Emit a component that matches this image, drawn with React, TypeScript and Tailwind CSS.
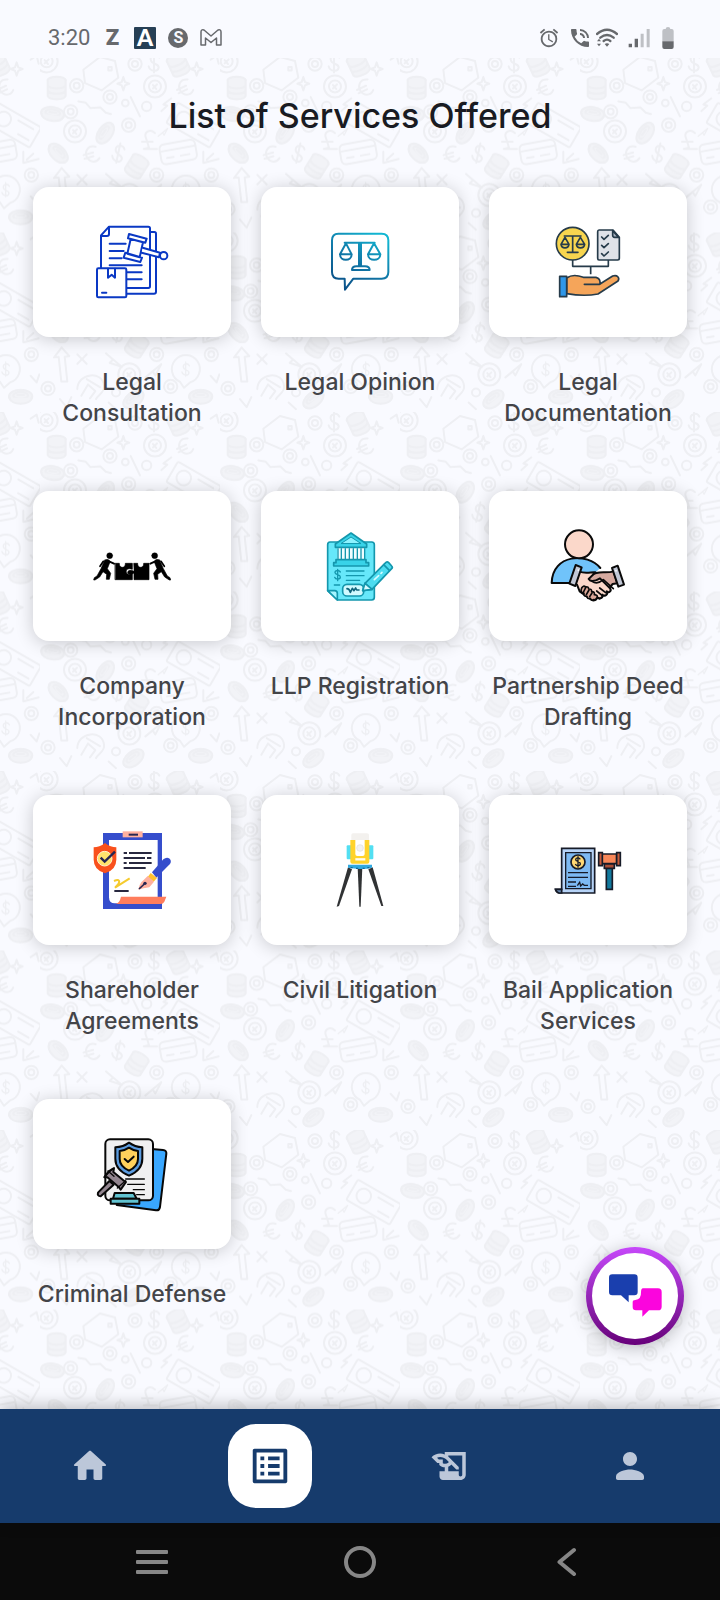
import type { ReactNode } from "react";
import { MdAlarm, MdHistoryEdu, MdListAlt, MdPhoneInTalk } from "react-icons/md";

function Doodles() {
  return (
    <svg className="absolute inset-0 h-full w-full" aria-hidden="true">
      <defs>
        <g id="coin">
          <circle r="20" />
          <circle r="9" />
        </g>
        <g id="bigcoin">
          <circle r="33" />
          <circle r="18" />
          <path d="M-6 6 6 -6M-6 -4 4 8" />
        </g>
        <g id="flatcoin" fill="#f2f3f7">
          <ellipse rx="35" ry="20" />
          <ellipse rx="22" ry="10" cy="-3" />
          <path d="M-34 4C-26 28 26 28 34 4M-10 -4h20" />
        </g>
        <g id="stack" fill="#f2f3f7">
          <ellipse rx="27" ry="10" cy="-24" />
          <path d="M-27 -24v48c6 13 48 13 54 0v-48M-27 -8c6 12 48 12 54 0M-27 8c6 12 48 12 54 0" />
        </g>
        <path id="curl" d="M16 -14C10 -28 -12 -24 -10 -8S16 2 14 16 -12 28 -16 12M0 -30v60" />
        <path id="euro" d="M18 -20C-4 -32 -18 -14 -16 2S4 30 20 16M-24 -5h30M-24 6h28" />
        <path id="dart" d="M-26 20 22 -20 4 14 -4 2Z" />
        <path id="spark" d="M0 -20 5 -5 18 0 5 5 0 20 -5 5 -18 0 -5 -5Z" />
        <pattern
          id="doodles"
          width="180"
          height="179.5"
          patternUnits="userSpaceOnUse"
          patternTransform="translate(40 -5)"
        >
          <g
            transform="scale(.3333)"
            fill="none"
            stroke="#eeeff3"
            strokeWidth="6"
            strokeLinecap="round"
            strokeLinejoin="round"
          >
            <use href="#bigcoin" x="20" y="25" />
            <use href="#coin" x="285" y="33" />
            <use href="#curl" x="342" y="28" />
            <path d="M130 50 180 12l45 12 10 50-50 38-50-22ZM205 42h10v10h-10Z" />
            <use href="#stack" transform="translate(415 35) rotate(-25)" />
            <use href="#stack" transform="translate(50 105)" />
            <use href="#coin" x="110" y="98" />
            <use href="#bigcoin" x="345" y="100" />
            <use href="#euro" transform="translate(435 105) rotate(-25)" />
            <use href="#coin" x="210" y="132" />
            <use href="#spark" x="250" y="92" />
            <use href="#spark" x="470" y="48" />
            <use href="#flatcoin" transform="translate(38 182) rotate(8)" />
            <use href="#coin" x="92" y="176" />
            <path d="M115 145l22 4 14 16 30-2 16 16 16 4" />
            <circle cx="256" cy="150" r="10" />
            <circle cx="320" cy="160" r="14" />
            <path d="M272 132 300 190M394 136l-24 18 12 4-18 16M512 20l18-12 6 24" />
            <use href="#bigcoin" x="105" y="235" />
            <use href="#flatcoin" transform="translate(195 240) rotate(-55)" />
            <use href="#coin" x="266" y="216" />
            <g transform="translate(466 218) rotate(30)">
              <rect x="-80" y="-34" width="150" height="70" rx="6" />
              <circle cx="-40" r="22" />
              <path d="M0 -18h52M20 18h36" />
            </g>
            <path d="M345 240c-16-14-36-2-26 18l8 26-16 4h40M306 266h32" />
            <use href="#dart" transform="translate(370 238) scale(.6)" />
            <use href="#flatcoin" transform="translate(55 300) rotate(45)" />
            <use href="#euro" transform="translate(155 305) rotate(-15)" />
            <use href="#curl" transform="translate(235 300) rotate(12)" />
            <use href="#stack" transform="translate(290 340) rotate(32)" />
            <g transform="translate(415 299) rotate(-10)">
              <rect x="-54" y="-32" width="108" height="60" rx="14" />
              <path d="M-54 -12H54M-36 10h20M6 10h26" />
            </g>
            <path d="M490 296v34l46-12M500 320l20-18" />
            <path d="M65 345 42 375l14-2 8 74h18l-8-74 14-2Z" />
            <path d="M112 366l28 28M140 366l-28 28" />
            <use href="#dart" transform="translate(222 385) rotate(80)" />
            <use href="#bigcoin" x="268" y="426" />
            <use href="#dart" x="342" y="415" />
            <use href="#coin" x="350" y="366" />
            <use href="#coin" x="514" y="366" />
            <path d="M420 448a42 42 0 1 1 30 2l-18 16Z" />
            <use href="#curl" transform="translate(437 410) scale(.7)" />
            <use href="#coin" x="24" y="468" />
            <path d="M112 470c0-48 76-58 80-10 4 20-20 28-24 40M124 490l20-34 22 20-16 22M140 440l40 24" />
            <use href="#flatcoin" transform="translate(280 500) rotate(-38)" />
            <use href="#flatcoin" transform="translate(482 492)" />
            <use href="#coin" x="392" y="462" />
            <path d="M60 500l20 24 14-30M206 510l22 20M512 430l18 20 8-24" />
            <circle cx="228" cy="480" r="12" />
          </g>
        </pattern>
      </defs>
      <rect width="100%" height="100%" fill="url(#doodles)" />
    </svg>
  );
}

function ConsultationIcon() {
  return (
    <svg
      viewBox="216 156 240 240"
      className="size-20"
      fill="none"
      stroke="#0a38c4"
      strokeWidth="6"
      strokeLinecap="round"
      strokeLinejoin="round"
    >
      <path d="M243 293V196l24-26h118q5 0 5 5v174q0 5-5 5H320" />
      <path d="M243 198h18q6 0 6-6v-20M392 186h11q5 0 5 5v174q0 6-6 6H320" />
      <path d="M269 221h48M269 243h42M269 265h36M269 286h96M322 307h43M322 328h43" />
      <path d="M327 192 380 206 376 218 324 205ZM332 207 369 217 359 262 322 251ZM316 248 366 263 361 276 311 263Z" fill="#fff" />
      <path d="M368 233 420 248 417 262 365 248" fill="#fff" />
      <circle cx="431" cy="257" r="11" fill="#fff" />
      <path d="M235 295h80q4 0 4 4v79q0 4-4 4h-80q-4 0-4-4v-79q0-4 4-4Z" fill="#fff" />
      <path d="M264 296v27l11-9 10 9v-27M246 368h13" />
    </svg>
  );
}

function OpinionIcon() {
  return (
    <svg
      viewBox="-120 156 240 240"
      className="size-20"
      fill="none"
      stroke="url(#opinion)"
      strokeWidth="6"
      strokeLinecap="round"
      strokeLinejoin="round"
    >
      <defs>
        <linearGradient id="opinion" gradientUnits="userSpaceOnUse" x1="-50" y1="360" x2="50" y2="190">
          <stop offset="0" stopColor="#0a4e86" />
          <stop offset=".5" stopColor="#1179a8" />
          <stop offset="1" stopColor="#12b6d2" />
        </linearGradient>
      </defs>
      <path d="M-65 191H65q20 0 20 20v95q0 20-20 20H-20L-45 359-46 326H-64q-20 0-20-20v-95q0-20 19-20Z" />
      <path d="M-46 218H44M-3 218v71M3 218v71M-24 300q0-11 13-11H15q14 0 14 11Z" />
      <path d="M-42 220-60 253h35ZM-60 253c0 22 35 22 35 0M42 220 24 253h37ZM24 253c0 22 37 22 37 0" />
    </svg>
  );
}

function DocumentationIcon() {
  return (
    <svg
      viewBox="564 156 240 240"
      className="size-20"
      fill="none"
      stroke="#263b4a"
      strokeWidth="5"
      strokeLinecap="round"
      strokeLinejoin="round"
    >
      <circle cx="638" cy="221" r="49" fill="#f7d54f" />
      <path d="M613 198h50M638 198v48M622 247h32" />
      <path d="M615 202 603 223h24ZM603 223c2 14 22 14 24 0M661 202 649 223h25ZM649 223c2 14 23 14 25 0" />
      <path d="M717 180h42l19 22v63q0 5-5 5h-56q-4 0-4-5v-80q0-5 4-5Z" fill="#dfe2e8" />
      <path d="M758 182v14q0 6 6 6h12Z" fill="#a9b4c2" />
      <path d="M725 201l7 7 13-12M725 226l7 7 13-12M725 251l7 7 13-12" />
      <path d="M638 270v19h107v-19M692 290v23" strokeLinecap="butt" />
      <path d="M620 324c14-10 32-9 50-2h38q14 3 12 20l38-24c14-5 22 6 16 15l-60 39q-42 8-94-1Z" fill="#f5a55a" />
      <path d="M673 343h46" />
      <path d="M599 319h21v61h-21Z" fill="#2f97e8" />
    </svg>
  );
}

function IncorporationIcon() {
  return (
    <svg
      viewBox="36 46 240 240"
      className="size-20"
      fill="#000"
      stroke="#000"
      strokeLinecap="round"
      strokeLinejoin="round"
    >
      <g id="pusher">
        <circle cx="89" cy="135" r="9" />
        <path d="M74 148c8-4 16 0 16 6l-8 20 10 14-4 18h-9l1-15-11-8-10 16-14 9h-4l2-7 8-5 12-22Z" strokeWidth="2" />
        <path d="M82 150l20 9" fill="none" strokeWidth="6" />
        <path d="M70 152l-10 15" fill="none" strokeWidth="5" />
      </g>
      <use href="#pusher" transform="translate(313 0) scale(-1 1)" />
      <path d="M106 158h12c-2 16 20 16 18 0h21v18c-14-5-20 2-18 9s10 8 18 3v19h-51Z" strokeWidth="2" />
      <path d="M162 158h11c-2 16 20 16 18 0h16v49h-45v-20q-8 6-16 3-6-5 0-10 8-3 16 2Z" strokeWidth="2" />
    </svg>
  );
}

function LlpIcon() {
  return (
    <svg
      viewBox="720 46 240 240"
      className="size-20"
      fill="none"
      stroke="#1497ad"
      strokeWidth="5"
      strokeLinecap="round"
      strokeLinejoin="round"
    >
      <path d="M750 94h125q8 0 8 8v158q0 8-8 8H772L743 240V102q0-8 7-8Z" fill="#66e8fa" />
      <path d="M743 240h21q8 0 8 8v20Z" fill="#a6f5ff" />
      <path d="M772 112h82v34h-82Z" fill="#effdff" stroke="none" />
      <path d="M766 100 813 67 860 100v10h-94Z" fill="#38d3e8" />
      <path d="M784 98 813 79 842 98Z" fill="#8df3ff" strokeWidth="3" />
      <path d="M774 114v30M784 114v30M796 114v30M808 114v30M820 114v30M832 114v30M843 114v30M854 114v30" strokeWidth="4" />
      <path d="M768 147h90v9h8v10H761v-10h7Z" fill="#38d3e8" />
      <path d="M799 181h53M799 195h53M799 209h40M763 223h16" strokeWidth="4" />
      <path d="M781 184c-5-7-17-5-16 2s16 5 16 13-14 9-17 1M773 176v34" strokeWidth="4" />
      <rect x="788" y="221" width="63" height="35" rx="13" fill="#d0faff" />
      <path d="M801 234q7 0 10 11l6-12 5 7 5-8 3 6h7" stroke="#12647b" />
      <path d="M855 218 918 155q4-3 8 1l9 10q4 4 0 8L876 236 848 240Z" fill="#4cdcf0" />
      <path d="M855 218 876 236M911 162l17 17" />
      <path d="M855 218 876 236 848 240Z" fill="#d5fbff" />
      <path d="M883 207l13-12M903 188l3-3" stroke="#d5fbff" />
    </svg>
  );
}

function PartnershipIcon() {
  return (
    <svg
      viewBox="84 46 240 240"
      className="size-20"
      fill="none"
      stroke="#0a0a0a"
      strokeWidth="6"
      strokeLinecap="round"
      strokeLinejoin="round"
    >
      <path d="M95 217c2-92 118-92 146-45l-50 45Z" fill="#70c3fa" stroke="none" />
      <path d="M146 217H95c2-88 108-92 146-45" />
      <circle cx="177" cy="101" r="42" fill="#fbd8ca" />
      <path d="M281 182c-22 8-48-4-66 12l-30 10 20 36 34 24 22-24 17-20 14-2Z" fill="#d6aaa0" />
      <path d="M178 183c20 7 38 0 48 2l-20 20c8 13 24 4 34-2l30 30c6 8-3 15-10 9 5 9-4 17-13 10 3 10-8 14-16 8-1 8-9 12-16 8l-36-26-8-20-12-4Z" fill="#fbd8ca" />
      <path d="M216 212c12 8 26 2 34-5l30 27M239 232l18 14M230 241l16 13" strokeWidth="5" />
      <path d="M185 232q5-9 12-3 9-2 9 6 10-1 9 8 10 0 8 9 12 1 8 9-4 8-11 6-7 3-9-4-10 2-10-6-11 0-9-9-13-2-7-16Z" fill="#dba899" strokeWidth="5" />
      <path d="M197 231l-8 16M207 238l-8 14M216 247l-7 11" strokeWidth="5" />
      <path d="M167 163 185 170 166 226 148 219ZM276 172 293 165 312 222 295 228Z" fill="#c2c8d6" />
      <path d="M175 178v1M288 180v1" stroke="#fff" strokeWidth="5" />
    </svg>
  );
}

function ShareholderIcon() {
  return (
    <svg viewBox="36 42 240 240" className="size-20" fill="none" strokeLinecap="butt">
      <path d="M69 51h177v228H69Z" fill="#354dcc" />
      <path d="M87 72h146v190H104q-17 0-17-18Z" fill="#fff" />
      <path d="M128 46h60v18h-60Z" fill="#ffb09e" />
      <path d="M146 56h28" stroke="#262652" strokeWidth="6" />
      <path d="M105 264q14-2 18-22h136l-6 15q-3 7-12 7Z" fill="#ff7d5c" />
      <path d="M131 111h10M147 111h68M131 126h64M201 126h13M131 141h9M147 141h68M131 156h66M103 225h43" stroke="#28283f" strokeWidth="6" />
      <path d="M102 195c16-7 19 0 12 10l-9 10 44-28" stroke="#f5cb2e" strokeWidth="6" />
      <path d="M41 94q17 0 34-13 17 13 34 13v37q0 30-34 41-34-11-34-41Z" fill="#f9501c" />
      <circle cx="74" cy="128" r="22" fill="#ffe36d" stroke="#fff3d3" strokeWidth="3" />
      <path d="M62 125l12 12 31-30" stroke="#262652" strokeWidth="7" />
      <path d="M216 169 250 130q10-9 19-2 7 8 0 17L229 185Z" fill="#354dcc" />
      <path d="M212 171l19 15-10 11-18-14Z" fill="#ffc12f" />
      <path d="M203 180l19 17-14 17q-18 2-33 7 2-14 9-22Z" fill="#ffb09e" />
      <path d="M177 219l16-15" stroke="#262652" strokeWidth="5" />
      <circle cx="195" cy="202" r="5" fill="#262652" />
    </svg>
  );
}

function LitigationIcon() {
  return (
    <svg viewBox="720 42 240 240" className="size-20" fill="none">
      <path d="M804 154 816 160 777 270 770 272Z" fill="#303234" />
      <path d="M865 160 878 154 910 270 904 270Z" fill="#303234" />
      <path d="M833 154h14l-5 118h-4Z" fill="#303234" />
      <path d="M800 91q0-3 3-3h74q3 0 3 3v36q0 3-3 3h-74q-3 0-3-3Z" fill="#52dff2" />
      <path d="M814 57q0-5 5-5h42q6 0 6 5v19h-53Z" fill="#f3f1ee" />
      <path d="M811 72h57v65q0 6-6 6h-45q-6 0-6-6Z" fill="#ffd32b" />
      <path d="M826 72h28v42q0 6-6 6h-16q-6 0-6-6Z" fill="#fff" />
      <circle cx="840" cy="96" r="10" fill="#f2f2f2" stroke="#ddd" strokeWidth="2" />
      <path d="M826 130h30" stroke="#fffdf0" strokeWidth="7" />
      <path d="M804 146h72v9q-18 5-36 4t-36-4Z" fill="#31a9df" />
      <path d="M812 155h6M828 157h6M848 157h6M862 155h6" stroke="#13689b" strokeWidth="4" />
    </svg>
  );
}

function BailIcon() {
  return (
    <svg viewBox="54 42 240 240" className="size-20" fill="none" stroke="#161b28" strokeWidth="5">
      <path d="M95 97h99v134H88q-10-2-12-11h19Z" fill="#b6d3f7" />
      <path d="M77 220h18v11h-8q-8-2-10-11Z" fill="#6687b0" />
      <path d="M107 110h76v108h-76Z" fill="#7db9f2" strokeWidth="4" />
      <circle cx="144" cy="138" r="21" fill="#ffd873" />
      <path d="M151 130c-4-7-14-5-14 1s14 5 14 12-12 8-15 1M144 121v34" strokeWidth="4" />
      <path d="M114 170h60M114 184h60M114 198h24M114 211h24M142 209l7-10 3 11 6-6 5 4h11" strokeWidth="4" />
      <path d="M229 155h18v65h-18Z" fill="#12799d" />
      <path d="M223 143h30v14h-30Z" fill="#a94d35" />
      <path d="M216 114h44v29h-44Z" fill="#f88758" />
      <path d="M206 110h11v39h-11ZM260 110h11v39h-11Z" fill="#c65c3d" />
    </svg>
  );
}

function DefenseIcon() {
  return (
    <svg
      viewBox="36 39 240 240"
      className="size-20"
      fill="none"
      stroke="#080808"
      strokeWidth="6"
      strokeLinecap="round"
      strokeLinejoin="round"
    >
      <path d="M215 84l34 3q11 1 10 11l-19 160q-2 11-12 10l-118-16Z" fill="#39a7ff" />
      <rect x="76" y="55" width="143" height="183" rx="14" fill="#f0f0f1" />
      <path d="M147 65q18 13 40 14v34q0 34-40 51-41-17-41-51V79q24-1 41-14Z" fill="#5b9ce0" />
      <path d="M147 80q13 9 27 10v24q0 22-27 35-28-13-28-35V90q15-1 28-10Z" fill="#ffd15c" />
      <path d="M134 114l10 9 17-16" />
      <path d="M137 174h56M143 190h50M160 206h33M170 221h23" strokeWidth="4" />
      <path d="M88 180l13 11-39 35q-11-1-8-11Z" fill="#92858f" />
      <path d="M86 151 102 141 100 153 130 178 138 183 122 206 116 198 82 169 73 169Z" fill="#92858f" />
      <path d="M84 150l18 16M73 167l25-24M112 201l25-22" strokeWidth="4" />
      <path d="M104 216h57l9 17H99Z" fill="#61c3d1" />
      <path d="M92 233h86v15H92Z" fill="#61c3d1" />
    </svg>
  );
}

const services: { name: string; icon: ReactNode }[] = [
  { name: "Legal Consultation", icon: <ConsultationIcon /> },
  { name: "Legal Opinion", icon: <OpinionIcon /> },
  { name: "Legal Documentation", icon: <DocumentationIcon /> },
  { name: "Company Incorporation", icon: <IncorporationIcon /> },
  { name: "LLP Registration", icon: <LlpIcon /> },
  { name: "Partnership Deed Drafting", icon: <PartnershipIcon /> },
  { name: "Shareholder Agreements", icon: <ShareholderIcon /> },
  { name: "Civil Litigation", icon: <LitigationIcon /> },
  { name: "Bail Application Services", icon: <BailIcon /> },
  { name: "Criminal Defense", icon: <DefenseIcon /> },
];

function StatusBar() {
  return (
    <header className="flex h-[58px] items-center justify-between pt-[18px] pr-[46px] pl-12 font-[Roboto,sans-serif] text-[#67696d]">
      <div className="flex items-center gap-3">
        <span className="text-[22px] leading-6">3:20</span>
        <span className="w-5 text-center text-[22px] leading-6 font-black">Z</span>
        <svg viewBox="0 0 22 22" className="size-[22px]">
          <rect width="22" height="22" rx="1" fill="#263f55" />
          <text
            x="11"
            y="19"
            textAnchor="middle"
            fill="#fff"
            fontFamily="Lato, sans-serif"
            fontSize="23"
            fontWeight="900"
          >
            A
          </text>
        </svg>
        <span className="flex size-5 items-center justify-center rounded-full bg-[#67696d] text-base leading-5 font-bold text-[#f8f9fe]">
          S
        </span>
        <svg viewBox="0 0 22 18" className="h-[18px] w-[22px]" fill="none" stroke="currentColor" strokeWidth="1.5">
          <path d="M1 3q0-3 3-2l7 6 7-6q3-1 3 2v13h-4.500V9L11 13.500 5.500 9v7H1Z" strokeLinejoin="round" />
        </svg>
      </div>
      <div className="flex items-center">
        <MdAlarm className="size-[22px]" />
        <MdPhoneInTalk className="ml-2 size-6" />
        <svg viewBox="0 0 66 60" className="ml-1 h-5 w-[22px]" fill="none" stroke="currentColor" strokeWidth="7">
          <path d="M3 18q30-26 60 0M13 29q20-16 40 0M23 39q10-8 20 0" strokeLinecap="round" />
          <path d="M33 56l-7-8q7-5 14 0ZM9 32l6 8H3ZM9 55l6-8H3Z" fill="currentColor" stroke="none" />
        </svg>
        <svg viewBox="0 0 66 60" className="ml-2.5 h-5 w-[22px]" fill="currentColor">
          <path d="M2 47h10v11H2ZM20 32h10v26H20Z" />
          <path d="M38 17h9v41h-9ZM56 3h9v55h-9Z" opacity=".4" />
        </svg>
        <svg viewBox="0 0 34 66" className="ml-3 h-[22px] w-3" fill="currentColor">
          <path d="M0 43V12q0-6 6-6h4q0-6 7-6t7 6h4q6 0 6 6v31Z" opacity=".4" />
          <path d="M0 43h34v17q0 6-6 6H6q-6 0-6-6Z" />
        </svg>
      </div>
    </header>
  );
}

function BottomNav() {
  return (
    <nav className="relative grid grid-cols-4 justify-items-center bg-[#163b6c] py-[15px] text-[#bcc7d9] shadow-[0_-3px_16px_rgba(0,0,0,0.25)]">
      <a href="#home" aria-label="Home" className="flex size-[84px] items-center justify-center">
        <svg viewBox="0 0 24 24" className="size-[42px]" fill="currentColor">
          <path d="M10 19v-5h4v5c0 .55.45 1 1 1h3c.55 0 1-.45 1-1v-7h1.700c.46 0 .68-.57.33-.87L12.670 3.600c-.38-.34-.96-.34-1.340 0l-8.360 7.530c-.34.3-.13.87.33.87H5v7c0 .55.45 1 1 1h3c.55 0 1-.45 1-1z" />
        </svg>
      </a>
      <a
        href="#services"
        aria-label="Services"
        className="flex size-[84px] items-center justify-center rounded-[28px] bg-white text-[#163b6c]"
      >
        <MdListAlt className="size-[46px]" />
      </a>
      <a href="#documents" aria-label="Documents" className="flex size-[84px] items-center justify-center">
        <MdHistoryEdu className="size-[42px]" />
      </a>
      <a href="#profile" aria-label="Profile" className="flex size-[84px] items-center justify-center">
        <svg viewBox="0 0 24 24" className="size-[42px]" fill="currentColor">
          <path d="M12 12c2.210 0 4-1.790 4-4s-1.790-4-4-4-4 1.790-4 4 1.790 4 4 4zm0 2c-2.670 0-8 1.340-8 4v1c0 .55.45 1 1 1h14c.55 0 1-.45 1-1v-1c0-2.660-5.330-4-8-4z" />
        </svg>
      </a>
    </nav>
  );
}

function SystemNav() {
  return (
    <div className="flex h-[77px] items-center justify-center gap-36 bg-[#0b0b0b] text-[#878787]">
      <button type="button" aria-label="Recent apps" className="flex w-16 justify-center">
        <svg viewBox="0 0 32 26" className="h-[26px] w-8" fill="currentColor">
          <rect width="32" height="4" rx="1" y="1" />
          <rect width="32" height="4" rx="1" y="11" />
          <rect width="32" height="4" rx="1" y="21" />
        </svg>
      </button>
      <button type="button" aria-label="Home screen" className="flex w-16 justify-center">
        <span className="size-8 rounded-full border-4 border-current" />
      </button>
      <button type="button" aria-label="Back" className="flex w-16 justify-center">
        <svg
          viewBox="0 0 22 30"
          className="h-[30px] w-[22px]"
          fill="none"
          stroke="currentColor"
          strokeWidth="4"
          strokeLinecap="round"
          strokeLinejoin="round"
        >
          <path d="M17 3 2.500 15 17 27" />
        </svg>
      </button>
    </div>
  );
}

export default function App() {
  return (
    <div className="flex min-h-screen flex-col bg-[#f9faff] font-[Inter,sans-serif]">
      <StatusBar />
      <main className="relative flex-1">
        <Doodles />
        <div className="relative px-[33px] pt-[38px] pb-16">
          <h1 className="text-center text-[34px] leading-10 font-medium text-[#191b22]">
            List of Services Offered
          </h1>
          <div className="mt-[51px] grid grid-cols-3 gap-x-[30px] gap-y-[62px]">
            {services.map((service) => (
              <a key={service.name} href="#service" className="flex flex-col gap-[30px]">
                <div className="flex h-[150px] items-center justify-center rounded-2xl bg-white shadow-[0_2px_18px_rgba(0,0,0,0.2)]">
                  {service.icon}
                </div>
                <span className="text-center text-[23px] leading-[31px] font-medium text-[#434448]">
                  {service.name}
                </span>
              </a>
            ))}
          </div>
        </div>
        <button
          type="button"
          aria-label="Open chat"
          className="absolute right-9 bottom-16 size-[98px] rounded-full bg-linear-to-b from-[#c648fa] to-[#67007a] p-1.5 shadow-[0_3px_18px_rgba(0,0,0,0.25)]"
        >
          <span className="flex size-full items-center justify-center rounded-full bg-white">
            <svg viewBox="620 415 168 168" className="size-14">
              <path d="M636 434h66q10 0 10 10v43q0 10-10 10h-17v21l-23-21h-26q-10 0-10-10v-43q0-10 10-10Z" fill="#1a3fae" />
              <path d="M728 476h45q11 0 11 11v44q0 11-11 11h-27l-20 19v-19h-19q-10 0-10-10v-14q0-7 8-7 18-1 17-23 0-12 6-12Z" fill="#fb05dd" />
            </svg>
          </span>
        </button>
      </main>
      <BottomNav />
      <SystemNav />
    </div>
  );
}
